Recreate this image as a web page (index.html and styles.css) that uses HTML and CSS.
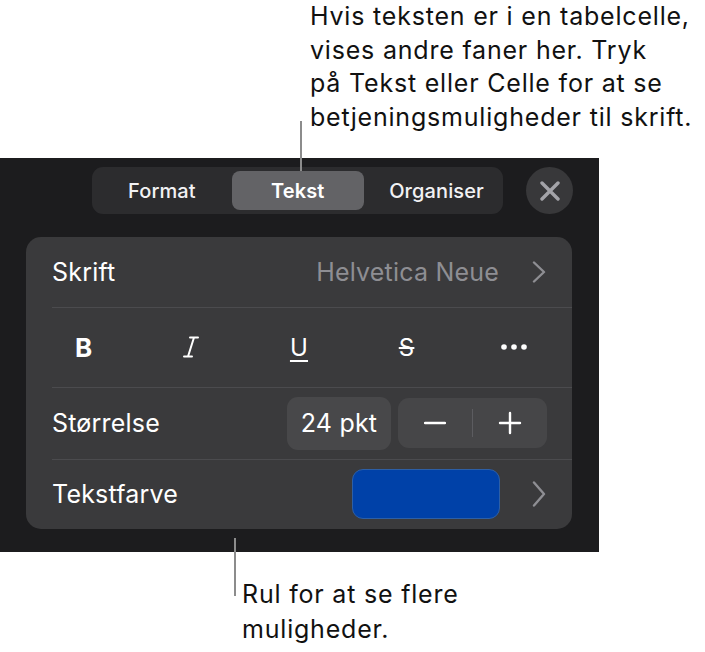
FILE: index.html
```html
<!DOCTYPE html>
<html lang="da">
<head>
<meta charset="utf-8">
<title>Tekst</title>
<link rel="stylesheet" href="styles.css">
</head>
<body>
<div class="page">
  <p class="callout callout-top">Hvis teksten er i en tabelcelle,<br>vises andre faner her. Tryk<br>på Tekst eller Celle for at se<br>betjeningsmuligheder til skrift.</p>

  <section class="panel">
    <div class="toolbar">
      <div class="segmented">
        <div class="tab">Format</div>
        <div class="tab tab-active">Tekst</div>
        <div class="tab tab-last">Organiser</div>
      </div>
      <div class="close">
        <svg width="20" height="20" viewBox="0 0 20 20"><path d="M2 2 L18 18 M18 2 L2 18" stroke="#a3a3a8" stroke-width="3.4" stroke-linecap="round" fill="none"/></svg>
      </div>
    </div>

    <div class="card">
      <div class="row row-font">
        <span class="label">Skrift</span>
        <span class="value">Helvetica Neue</span>
        <svg class="chevron" width="14" height="22" viewBox="0 0 14 22"><path d="M2 1.5 L12 11 L2 20.5" stroke="#8e8e93" stroke-width="2.4" stroke-linecap="round" stroke-linejoin="round" fill="none"/></svg>
      </div>
      <div class="row row-styles">
        <span class="style-btn style-b">B</span>
        <span class="style-btn">
          <svg width="16" height="22" viewBox="0 0 16 22"><path d="M7 1.5 H15 M1 20.5 H9 M11 1.5 L5 20.5" stroke="#fff" stroke-width="2" stroke-linecap="round" fill="none"/></svg>
        </span>
        <span class="style-btn style-u">U</span>
        <span class="style-btn style-s">S</span>
        <span class="style-btn">
          <svg width="26" height="6" viewBox="0 0 26 6"><circle cx="3" cy="3" r="2.8" fill="#fff"/><circle cx="13" cy="3" r="2.8" fill="#fff"/><circle cx="23" cy="3" r="2.8" fill="#fff"/></svg>
        </span>
      </div>
      <div class="row row-size">
        <span class="label">Størrelse</span>
        <span class="size-box">24 pkt</span>
        <div class="stepper">
          <span class="step">
            <svg width="22" height="4" viewBox="0 0 22 4"><path d="M1 2 H21" stroke="#fff" stroke-width="2.4" stroke-linecap="round"/></svg>
          </span>
          <span class="step-divider"></span>
          <span class="step">
            <svg width="24" height="24" viewBox="0 0 24 24"><path d="M2 12 H22 M12 2 V22" stroke="#fff" stroke-width="2.4" stroke-linecap="round"/></svg>
          </span>
        </div>
      </div>
      <div class="row row-color">
        <span class="label">Tekstfarve</span>
        <span class="swatch"></span>
        <svg class="chevron" width="14" height="26" viewBox="0 0 14 26"><path d="M2 1.5 L12 13 L2 24.5" stroke="#8e8e93" stroke-width="2.4" stroke-linecap="round" stroke-linejoin="round" fill="none"/></svg>
      </div>
    </div>
  </section>

  <p class="callout callout-bottom">Rul for at se flere<br>muligheder.</p>

  <span class="leader leader-top"></span>
  <span class="leader leader-bottom"></span>
</div>
</body>
</html>
```

FILE: styles.css
```css
* { box-sizing: border-box; }

html, body {
  margin: 0;
  padding: 0;
  background: #ffffff;
}

body {
  font-family: Inter, "Noto Sans", "Liberation Sans", sans-serif;
}

.page {
  position: relative;
  width: 705px;
  height: 652px;
  overflow: hidden;
}

.callout {
  margin: 0;
  color: #111111;
  font-size: 25px;
  line-height: 33.5px;
  letter-spacing: 0.8px;
}

.callout-top {
  margin: 0 0 0 310px;
  height: 158px;
}

.callout-bottom {
  margin: 25px 0 0 242px;
  line-height: 35px;
}

.leader {
  position: absolute;
  width: 2px;
  background: #8c8c8c;
}

.leader-top {
  left: 300px;
  top: 121px;
  height: 50px;
}

.leader-bottom {
  left: 234px;
  top: 538px;
  height: 58px;
}

/* panel */
.panel {
  width: 599px;
  height: 394px;
  background: #1c1c1e;
  padding: 9px 26px 23px 26px;
}

.toolbar {
  display: flex;
  align-items: center;
  gap: 23px;
  padding-left: 66px;
}

.segmented {
  width: 415px;
  height: 47px;
  background: #2c2c2e;
  border-radius: 11px;
  padding: 4px;
  display: flex;
  gap: 4px;
}

.tab {
  flex: 1 1 0;
  min-width: 0;
  display: flex;
  align-items: center;
  justify-content: center;
  color: #f2f2f4;
  font-size: 20px;
  font-weight: 500;
  letter-spacing: 0.1px;
  border-radius: 8px;
}

.tab-active {
  background: #636366;
  color: #ffffff;
  font-weight: 600;
}

.tab-last {
  text-indent: 6px;
}

.close {
  width: 47px;
  height: 47px;
  border-radius: 50%;
  background: #38383a;
  display: flex;
  align-items: center;
  justify-content: center;
}

.card {
  margin-top: 23px;
  width: 546px;
  background: #3a3a3c;
  border-radius: 15px;
  overflow: hidden;
}

.row {
  display: flex;
  align-items: center;
  color: #ffffff;
  font-size: 25px;
  letter-spacing: 0.2px;
  position: relative;
}

.row + .row::before {
  content: "";
  position: absolute;
  left: 26px;
  right: 0;
  top: 0;
  height: 1px;
  background: #4b4b4e;
}

.label {
  flex: 1;
}

.row-font {
  height: 70px;
  padding: 0 26px;
}

.value {
  color: #8e8e93;
  margin-right: 33px;
}

.row-styles {
  height: 80px;
  padding: 0 4px;
}

.style-btn {
  flex: 1;
  display: flex;
  align-items: center;
  justify-content: center;
  font-size: 24px;
}

.style-b {
  font-weight: 700;
  font-size: 26px;
}

.style-u {
  text-decoration: underline;
  text-decoration-thickness: 2px;
  text-underline-offset: 4px;
}

.style-s {
  text-decoration: line-through;
  text-decoration-thickness: 2px;
}

.row-size {
  height: 72px;
  padding: 0 25px 0 26px;
}

.size-box {
  width: 104px;
  height: 53px;
  border-radius: 11px;
  background: #48484a;
  display: flex;
  align-items: center;
  justify-content: center;
  margin-right: 7px;
}

.stepper {
  width: 149px;
  height: 50px;
  border-radius: 11px;
  background: #464648;
  display: flex;
  align-items: center;
}

.step {
  flex: 1;
  display: flex;
  align-items: center;
  justify-content: center;
}

.step-divider {
  width: 1px;
  height: 28px;
  background: #5c5c60;
}

.row-color {
  height: 70px;
  padding: 0 26px;
}

.swatch {
  width: 148px;
  height: 50px;
  border-radius: 11px;
  background: #0041a8;
  border: 1px solid #2d5fa6;
  margin-right: 32px;
}

.chevron {
  display: block;
}
```
